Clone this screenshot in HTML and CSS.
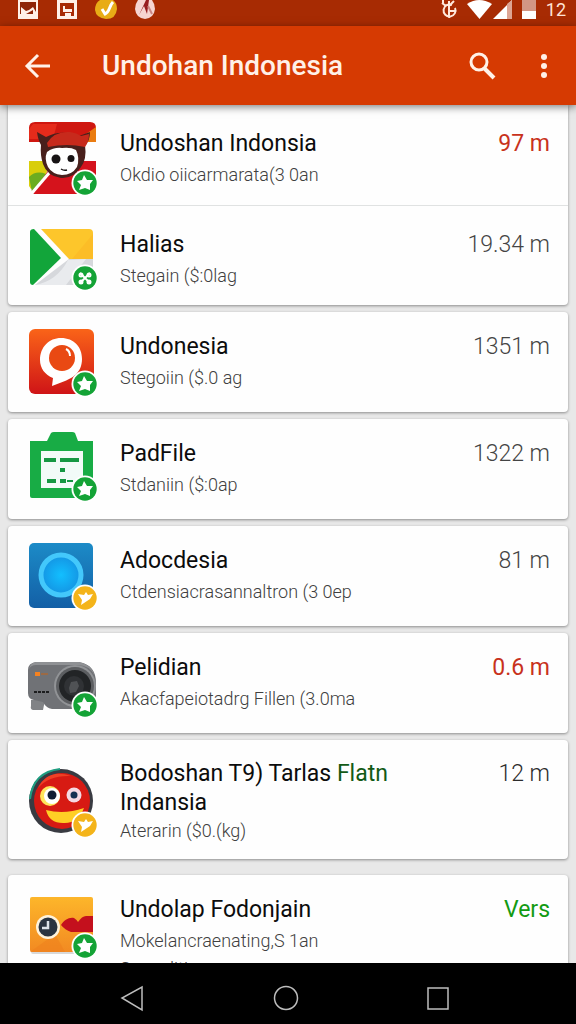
FILE: index.html
```
<!DOCTYPE html>
<html lang="id">

<head>
    <meta charset="UTF-8">
    <meta name="viewport" content="width=device-width, initial-scale=1">
    <title>Undohan Indonesia</title>
    <link rel="stylesheet" href="styles.css">
</head>

<body>
    <!-- badges shared by the app icons -->
    <svg class="defs" aria-hidden="true">
        <symbol id="badge-green" viewBox="-14 -14 28 28">
            <circle r="13.5" fill="#fff" />
            <circle r="11.7" fill="#14a336" />
            <path d="M-1-8 2-3 8-3 5 1 5 7 0 5-6 7-4 2-8-2-3-3z" fill="#fff" />
        </symbol>
        <symbol id="badge-yellow" viewBox="-14 -14 28 28">
            <circle r="13.5" fill="#fff" />
            <circle r="11.7" fill="#f4b41a" />
            <path d="M-7-4-1-3 1-6 3-3 8-4 5 1-4 7-3 2z" fill="#fff" />
        </symbol>
    </svg>

    <div class="status">
        <div class="status_group status_left">
            <svg width="22" height="20" viewBox="0 0 22 20"><path d="M1 0h20v19H1z" fill="#fff1e8" /><path d="M3 2h16v12H3z" fill="#8f2507" /><path d="M4 7l5 4 3-1 4-3 3 5v2H4z" fill="#fff1e8" /><path d="M9 14l7-4v4z" fill="#8f2507" /></svg>
            <svg width="22" height="20" viewBox="0 0 22 20"><path d="M1 0h20v19H1z" fill="#fff1e8" /><path d="M4 3h14v13h-3v-3H9v3H4z" fill="#a82b05" /><path d="M7 6h9v6H7z" fill="#fff1e8" /><path d="M9 6h7v3H9z" fill="#a82b05" /></svg>
            <svg width="22" height="20" viewBox="0 0 22 20"><path d="M5 0h13q4 3 4 9-1 10-11 10Q1 18 0 10 0 3 5 0z" fill="#e8ac16" /><path d="M7 9l3 5c5-2 4-8 8-12" fill="none" stroke="#fff" stroke-width="3" /></svg>
            <svg width="22" height="20" viewBox="0 0 22 20"><path d="M4 0h14q3 4 3 9-1 9-10 10Q2 18 1 9q0-5 3-9z" fill="#f6d5d1" /><path d="M12 0h3l-2 14-3-8-5 9z" fill="#971d20" /><path d="M14 6l4 8" stroke="#c98583" stroke-width="2" /></svg>
        </div>
        <div class="status_group status_right">
            <svg width="18" height="20" viewBox="0 0 18 20"><path d="M2 3l4 3M3 0v3M14 1l-5 5M15 8a6 6 0 1 1-3-3M9 1v17M9 11h6M9 11v-5" fill="none" stroke="#ffe9dc" stroke-width="2" /></svg>
            <svg width="46" height="20" viewBox="0 0 46 20"><path d="M0 4q12-8 25 0L12.500 19z" fill="#fff" /><path d="M45 0v19H26z" fill="#fff" /><path d="M40 4l5-4v19h-5z" fill="#dda594" /></svg>
            <svg width="15" height="20" viewBox="0 0 15 20"><path d="M0 0h14v11H0z" fill="#d29684" /><path d="M0 11h14v8H0z" fill="#fff" /></svg>
            <span class="clock">12</span>
        </div>
    </div>

    <header class="appbar">
        <button class="icon_btn" aria-label="Kembali">
            <svg width="28" height="28" viewBox="0 0 28 28"><path d="M26 14H4M14 3L3 14l11 11" fill="none" stroke="#fff1e8" stroke-width="3" /></svg>
        </button>
        <h1>Undohan Indonesia</h1>
        <button class="icon_btn" aria-label="Cari">
            <svg width="28" height="28" viewBox="0 0 28 28"><circle cx="11" cy="10" r="8" fill="none" stroke="#fff1e8" stroke-width="3" /><path d="M16 16l10 10" stroke="#fff1e8" stroke-width="4" /></svg>
        </button>
        <button class="icon_btn" aria-label="Menu">
            <svg width="28" height="28" viewBox="0 0 28 28"><g fill="#fff1e8"><circle cx="14" cy="5" r="3" /><circle cx="14" cy="14" r="3" /><circle cx="14" cy="23" r="3" /></g></svg>
        </button>
    </header>

    <main class="list">
        <section class="card card_first">
            <article class="row">
                <svg class="app" viewBox="0 0 72 76">
                    <path d="M1 21V7q0-6 6-6h55q6 0 6 6v14z" fill="#cf1710" />
                    <path d="M5 3h24l-4 15H1V8z" fill="#e52b1b" />
                    <path d="M55 15L68 6v15H55z" fill="#ea7c11" />
                    <path d="M1 40h20l-4 20-14 8-2-3z" fill="#d9ce0a" />
                    <path d="M1 56q7-7 17-3l-1 8L4 71z" fill="#6bac20" />
                    <path d="M50 40h18v27H50z" fill="#d4121d" />
                    <path d="M21 48h27l15 25H5z" fill="#d5131c" />
                    <path d="M4 72L22 51" stroke="#fff" stroke-width="3" />
                    <path d="M9 11l9 5q15-8 33-1l11-4q0 9-5 13 2 14-4 22-8 12-20 11-14-2-18-14-3-9-2-19-3-5-4-13z" fill="#49201c" />
                    <path d="M19 22q7-12 23-11 7 1 11 4l8-2q0 8-4 13-18-4-37 0z" fill="#c72a1c" />
                    <path d="M19 31q7-5 15-4 9-1 14 2 4 8 1 17-5 8-15 8-10-1-14-8-4-8-1-15z" fill="#fff" />
                    <circle cx="28" cy="38" r="4.500" fill="#181415" /><circle cx="43" cy="37.500" r="3.500" fill="#181415" />
                    <path d="M33 48q3 2 6 1" fill="none" stroke="#181415" stroke-width="1.500" />
                    <use href="#badge-green" x="43" y="48" width="28" height="28" />
                </svg>
                <div class="info">
                    <div class="head"><h2>Undoshan Indonsia</h2><span class="size red">97 m</span></div>
                    <p>Okdio oiicarmarata(3 0an</p>
                </div>
            </article>
            <article class="row">
                <svg class="app" viewBox="0 0 72 76">
                    <path d="M13 7h48q4 0 4 4v26H41z" fill="#fdc62b" />
                    <path d="M65 12v25H44z" fill="#fcbd27" />
                    <path d="M41 37h24v26H7z" fill="#d6d8dc" />
                    <path d="M7 63q22-4 33-25l18-1L38 63z" fill="#e9ebee" />
                    <path d="M2 10q0-3 4-3L33 36 5 63q-3 0-3-3z" fill="#12a53a" />
                    <circle cx="57" cy="56" r="13.500" fill="#fff" /><circle cx="57" cy="56" r="11.700" fill="#14a336" />
                    <path d="M52 51l10 10M62 51L52 61" stroke="#fff" stroke-width="2" /><g fill="none" stroke="#fff" stroke-width="2"><circle cx="53" cy="53" r="1.500" /><circle cx="61" cy="53" r="1.500" /><circle cx="53" cy="60" r="1.500" /><circle cx="61" cy="60" r="1.500" /></g>
                </svg>
                <div class="info">
                    <div class="head"><h2>Halias</h2><span class="size">19.34 m</span></div>
                    <p>Stegain ($:0lag</p>
                </div>
            </article>
        </section>

        <section class="card">
            <article class="row">
                <svg class="app" viewBox="0 0 72 76">
                    <defs>
                        <linearGradient id="g-red" x1="0" y1="0" x2="0" y2="1"><stop offset="0" stop-color="#fa6418" /><stop offset="1" stop-color="#cf1417" /></linearGradient>
                    </defs>
                    <rect x="1" y="5" width="65" height="65" rx="6" fill="url(#g-red)" />
                    <path d="M33 14c13 0 21 9 21 21 0 14-10 19-17 22L24 62l1-8C17 51 12 44 12 36c0-13 9-22 21-22z" fill="#fff" />
                    <circle cx="34" cy="34" r="13" fill="#e94913" />
                    <path d="M38 25q4 2 4 7" fill="none" stroke="#fff" stroke-width="2" />
                    <use href="#badge-green" x="43" y="46" width="28" height="28" />
                </svg>
                <div class="info">
                    <div class="head"><h2>Undonesia</h2><span class="size">1351 m</span></div>
                    <p>Stegoiin ($.0 ag</p>
                </div>
            </article>
        </section>

        <section class="card">
            <article class="row">
                <svg class="app" viewBox="0 0 72 76">
                    <path d="M2 10h17l4-8q1-1 3-1h18q2 0 3 1l3 8h15v56q0 1-2 1H4q-2 0-2-2z" fill="#18ac45" />
                    <path d="M13 20h42v37H13z" fill="#f2fbf8" />
                    <path d="M16 27h12v4H16zM32 27h19v4H32zM32 37h5v4h-5zM19 48h9v4h-9zM32 48h6v4h-6zM39 49h6v2h-6z" fill="#169843" />
                    <use href="#badge-green" x="43" y="44" width="28" height="28" />
                </svg>
                <div class="info">
                    <div class="head"><h2>PadFile</h2><span class="size">1322 m</span></div>
                    <p>Stdaniin ($:0ap</p>
                </div>
            </article>
        </section>

        <section class="card">
            <article class="row">
                <svg class="app" viewBox="0 0 72 76">
                    <defs>
                        <linearGradient id="g-blue" x1="0" y1="0" x2="0" y2="1"><stop offset="0" stop-color="#1c8bc7" /><stop offset="1" stop-color="#135fa6" /></linearGradient>
                        <radialGradient id="g-lens"><stop offset="0" stop-color="#12bfff" /><stop offset="1" stop-color="#1494e3" /></radialGradient>
                    </defs>
                    <rect x="1" y="5" width="64" height="65" rx="5" fill="url(#g-blue)" />
                    <circle cx="33" cy="37" r="20" fill="url(#g-lens)" stroke="#43c8fb" stroke-width="5" />
                    <use href="#badge-yellow" x="43" y="46" width="28" height="28" />
                </svg>
                <div class="info">
                    <div class="head"><h2>Adocdesia</h2><span class="size">81 m</span></div>
                    <p>Ctdensiacrasannaltron (3 0ep</p>
                </div>
            </article>
        </section>

        <section class="card">
            <article class="row">
                <svg class="app" viewBox="0 0 72 76">
                    <path d="M3 55h14l-2 10H5q-3-1-2-4z" fill="#818386" />
                    <path d="M8 17h43q17 3 17 21v14q-3 12-14 12H24q-6-1-9-7l-9-2q-6-1-6-7V25q0-7 8-8z" fill="#707276" />
                    <path d="M8 17h43q12 2 16 14-5-11-18-11H8q-5 0-7 4 1-6 7-7z" fill="#8f9194" />
                    <circle cx="47" cy="41" r="21" fill="#919396" /><circle cx="47" cy="41" r="19" fill="#5c5e61" />
                    <circle cx="47" cy="41" r="16" fill="#222426" /><circle cx="46" cy="41" r="10" fill="#303235" /><path d="M43 37l6-1 2 5-3 6-6 1-1-5z" fill="#505255" />
                    <path d="M7 27h5v4H7z" fill="#f58220" /><path d="M13 28h7v2h-7z" fill="#9b6a45" />
                    <path d="M6 47h15" stroke="#1c1d1e" stroke-width="2" stroke-dasharray="3 1" />
                    <use href="#badge-green" x="43" y="46" width="28" height="28" />
                </svg>
                <div class="info">
                    <div class="head"><h2>Pelidian</h2><span class="size red">0.6 m</span></div>
                    <p>Akacfapeiotadrg Fillen (3.0ma</p>
                </div>
            </article>
        </section>

        <section class="card">
            <article class="row row_tall">
                <svg class="app" viewBox="0 0 72 76">
                    <circle cx="33" cy="37" r="32" fill="#393b42" />
                    <path d="M2 35Q5 8 32 5" fill="none" stroke="#1f9d80" stroke-width="2" />
                    <circle cx="34" cy="37" r="28" fill="#d71a13" />
                    <path d="M10 24q10-20 33-12-22-1-33 12z" fill="#ef4025" />
                    <circle cx="22" cy="32" r="10" fill="#ffe45b" /><circle cx="24" cy="32" r="8" fill="#fff" /><circle cx="24" cy="31" r="4.500" fill="#101d33" />
                    <circle cx="46" cy="31" r="7.500" fill="#f5d9e3" /><circle cx="46" cy="31" r="3.500" fill="#143052" />
                    <path d="M18 46q18 5 38-2-6 16-21 15-14 0-17-13z" fill="#ffcf25" />
                    <use href="#badge-yellow" x="43" y="47" width="28" height="28" />
                </svg>
                <div class="info">
                    <div class="head"><h2>Bodoshan T9) Tarlas <span class="green_dark">Flatn</span> Indansia</h2><span class="size dark">12 m</span></div>
                    <p>Aterarin ($0.(kg)</p>
                </div>
            </article>
        </section>

        <section class="card card_last">
            <article class="row row_top">
                <svg class="app" viewBox="0 0 72 76">
                    <defs>
                        <linearGradient id="g-orange" x1="0" y1="0" x2="0" y2="1"><stop offset="0" stop-color="#fdb62a" /><stop offset="1" stop-color="#f28a22" /></linearGradient>
                    </defs>
                    <rect x="3" y="5" width="61" height="54" rx="2" fill="#000" opacity=".15" />
                    <rect x="2" y="2" width="63" height="55" rx="2" fill="url(#g-orange)" />
                    <path d="M2 57l25-18 10 18z" fill="#ee7e1c" opacity=".5" />
                    <path d="M33 30c3-5 8-8 13-7q3 2 4 4 4-6 8-6h7v16H43q-6-2-10-7z" fill="#c4101d" />
                    <circle cx="20" cy="32" r="12" fill="#fff3db" /><circle cx="20" cy="32" r="9.500" fill="#2b3440" />
                    <path d="M20 26v7h-6" fill="none" stroke="#dce2e8" stroke-width="2.500" />
                    <use href="#badge-green" x="43" y="37" width="28" height="28" />
                </svg>
                <div class="info">
                    <div class="head"><h2>Undolap Fodonjain</h2><span class="size green">Vers</span></div>
                    <p>Mokelancraenating,S 1an</p>
                    <p>Sunnalitin</p>
                </div>
            </article>
        </section>
    </main>

    <nav class="navbar">
        <button aria-label="Kembali"><svg width="28" height="28" viewBox="0 0 28 28"><path d="M24 3v23L4 14z" fill="none" stroke="#bdbdbd" stroke-width="1.500" /></svg></button>
        <button aria-label="Beranda"><svg width="28" height="28" viewBox="0 0 28 28"><circle cx="15" cy="14" r="11.500" fill="none" stroke="#bdbdbd" stroke-width="1.500" /></svg></button>
        <button aria-label="Terbaru"><svg width="28" height="28" viewBox="0 0 28 28"><rect x="4" y="4" width="20" height="21" fill="none" stroke="#bdbdbd" stroke-width="1.500" /></svg></button>
    </nav>
</body>

</html>
```
FILE: styles.css
```
* {
    box-sizing: border-box;
}

body,
h1,
h2,
p {
    margin: 0;
    padding: 0;
    font-weight: 400;
}

body {
    display: flex;
    flex-direction: column;
    height: 100vh;
    overflow: hidden;
    background: #e8e8e8;
    color: #0c0c0c;
    font-family: Roboto, "Liberation Sans", sans-serif;
}

button {
    padding: 0;
    border: 0;
    background: none;
    cursor: pointer;
}

svg {
    display: block;
    flex-shrink: 0;
}

.defs {
    position: absolute;
    width: 0;
    height: 0;
}

/* status bar */
.status {
    display: flex;
    justify-content: space-between;
    flex-shrink: 0;
    height: 26px;
    padding: 0 10px 0 17px;
    background: #a72b03;
}

.status_group {
    display: flex;
}

.status_left {
    gap: 17px;
}

.status_right {
    gap: 9px;
}

.clock {
    color: #ffe3d6;
    font-size: 18px;
    line-height: 20px;
}

/* app bar */
.appbar {
    display: flex;
    align-items: center;
    flex-shrink: 0;
    height: 79px;
    padding: 0 8px 0 14px;
    background: #d63a02;
    box-shadow: 0 2px 8px rgba(0, 0, 0, 0.5);
    z-index: 1;
}

.appbar h1 {
    flex: 1;
    padding-left: 40px;
    color: #fff1e8;
    font-size: 28px;
    font-weight: 500;
    line-height: 32px;
}

.icon_btn {
    display: flex;
    align-items: center;
    justify-content: center;
    width: 48px;
    height: 48px;
}

.icon_btn + .icon_btn {
    margin-left: 14px;
}

/* list of cards */
.list {
    display: flex;
    flex-direction: column;
    flex: 1;
    gap: 7px;
    min-height: 0;
    padding: 0 8px;
    overflow: hidden;
}

.card {
    flex-shrink: 0;
    border-radius: 4px;
    background: #fefefe;
    box-shadow: 0 1px 3px rgba(0, 0, 0, 0.4);
}

.card_first {
    border-radius: 0 0 4px 4px;
}

.card_first .row {
    padding-top: 8px;
}

.card_first .row + .row {
    border-top: 1px solid #e0e2e2;
}

.card_last {
    margin-top: 9px;
}

.row {
    display: flex;
    align-items: center;
    gap: 20px;
    min-height: 100px;
    padding: 0 18px 0 20px;
}

.row_tall {
    min-height: 119px;
    padding-top: 4px;
}

.row_top {
    align-items: flex-start;
    padding-top: 20px;
}

.app {
    width: 72px;
    height: 76px;
}

.info {
    flex: 1;
    min-width: 0;
}

.head {
    display: flex;
    justify-content: space-between;
    gap: 20px;
}

.info h2 {
    max-width: 280px;
    font-size: 23px;
    line-height: 29px;
}

.info p {
    color: #404040;
    font-size: 18px;
    font-weight: 300;
    line-height: 28px;
}

.head + p {
    margin-top: 3px;
}

.row_tall .head + p {
    margin-top: 0;
}

.size {
    flex-shrink: 0;
    color: #444;
    font-size: 23px;
    font-weight: 300;
    line-height: 29px;
}

.dark {
    color: #2c2c2c;
}

.red {
    color: #c8321c;
    font-weight: 400;
}

.green {
    color: #129a12;
    font-weight: 400;
}

.green_dark {
    color: #125a16;
}

/* navigation */
.navbar {
    display: flex;
    align-items: center;
    justify-content: space-between;
    flex-shrink: 0;
    height: 61px;
    padding: 8px 114px 0 108px;
    background: #000;
}

.navbar button {
    display: flex;
    align-items: center;
    justify-content: center;
    width: 48px;
    height: 48px;
}
```
